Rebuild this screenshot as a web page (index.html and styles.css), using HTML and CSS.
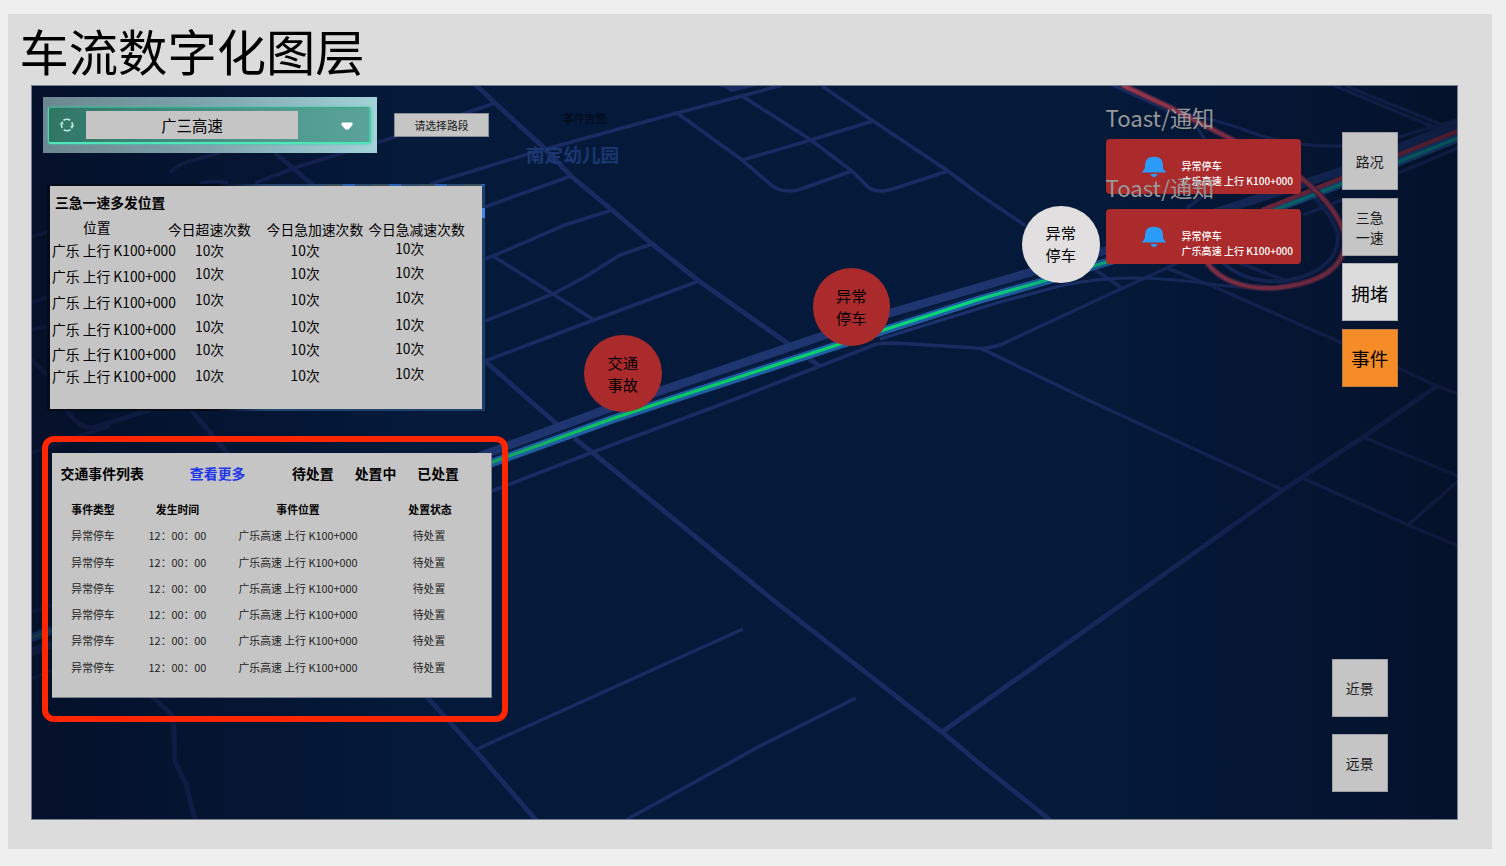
FILE: index.html
```html
<!DOCTYPE html>
<html lang="zh-CN">
<head>
<meta charset="utf-8">
<title>车流数字化图层</title>
<link rel="stylesheet" href="styles.css">
</head>
<body>
<main class="sheet">
  <h1 class="title">车流数字化图层</h1>
  <div class="map">
    <svg class="map-art" viewBox="32 86 1425 733" width="1425" height="733">
      <defs>
        <linearGradient id="shade" x1="0" x2="1" y1="0" y2="0">
          <stop offset="0" stop-color="#050c20" stop-opacity=".66"/>
          <stop offset=".17" stop-color="#040f2a" stop-opacity=".42"/>
          <stop offset=".36" stop-color="#051a3b" stop-opacity="0"/>
          <stop offset=".66" stop-color="#051a3b" stop-opacity="0"/>
          <stop offset=".85" stop-color="#040f2a" stop-opacity=".4"/>
          <stop offset="1" stop-color="#050c20" stop-opacity=".6"/>
        </linearGradient>
        <linearGradient id="green" gradientUnits="userSpaceOnUse" x1="480" x2="1458" y1="0" y2="0">
          <stop offset="0" stop-color="#19a860"/>
          <stop offset=".15" stop-color="#0ac85c"/>
          <stop offset=".5" stop-color="#08d878"/>
          <stop offset=".8" stop-color="#0aa090"/>
          <stop offset="1" stop-color="#06b8a8"/>
        </linearGradient>
      </defs>
      <g class="street">
        <path d="M476 85L495 103 543 147 571 176 612 210 652 244 699 281 790 345"/>
        <path d="M806 356L819 366"/>
        <path d="M485 361L528 399 558 425M574 438L593 453 773 600 942 732 980 764 1050 820"/>
        <path d="M427 697L475 750 536 820"/>
        <path d="M942 732L1283 490 1363 437 1417 400 1437 386"/>
        <path d="M275 153L313 185M152 697L170 713Q174 718 174 730L175 762 186 784 195 820"/>
        <path d="M31 360L48 375M67 411Q82 431 95 427L150 410M191 410L228 454"/>
      </g>
      <g class="street minor">
        <path d="M495 103L395 137 300 166 255 183M170 173Q178 163 195 160L222 152M200 184Q210 179 228 183"/>
        <path d="M430 184L535 152 677 113 742 96 782 85"/>
        <path d="M677 113L742 160 770 184Q777 191 790 191 797 191 804 188L852 171M742 160L811 140 873 121"/>
        <path d="M742 96L811 140 852 171 868 187Q872 191 884 191 890 190 896 188L948 171"/>
        <path d="M822 86L873 121 948 171 980 195 1026 226M1094 269L1122 288"/>
        <path d="M571 176L485 207M612 210L565 225 493 256 485 259M652 244L620 255 585 277 553 294 485 321"/>
        <path d="M493 256L553 294 594 320M699 281L594 320 485 361"/>
        <path d="M492 491L593 452 733 400 820 366 874 345Q880 343 895 343L976 348Q987 349 1000 345L1123 288 1167 268 1187 258"/>
        <path d="M980 348L1088 400 1283 490M1167 268L1210 285 1342 343 1398 368 1437 386 1458 394"/>
        <path d="M1363 437L1458 476M1300 477L1408 525 1458 546M1408 525L1458 481"/>
        <path d="M475 750L743 629M626 820L760 746 856 698"/>
        <path d="M31 237L48 232M31 303L48 297M31 330L48 326M31 453L80 436 110 426M31 612L52 605M31 679L52 670"/>
        <path d="M1240 263L1286 281M1187 208L1203 196"/>
      </g>
      <g class="ramp">
        <path d="M1112 85L1167 110Q1220 120 1250 132 1290 147 1343 146 1375 144 1398 137L1458 120"/>
        <path d="M1188 113L1205 140M1333 85L1436 128M1346 86L1450 128M1398 173L1458 148"/>
        <path d="M1315 198Q1337 222 1338 237 1337 270 1290 280 1250 286 1223 263" stroke-width="4"/>
        <path d="M880 339L1000 302 1060 286Q1095 278 1133 278 1170 278 1210 284 1260 291 1300 284"/>
        <path d="M1303 215L1342 200"/>
      </g>
      <path class="band" d="M31 652L52 644M478 457L607 409 660 391 793 346 890 313 980 287 1107 250 1223 210 1342 171 1398 148 1458 124"/>
      <path class="glow" d="M31 638L52 630M480 467L613 419 670 400 837 345.500 980 299.500 1047 280.500 1107 262 1277 208 1398 162 1458 138"/>
      <path class="gap" d="M480 461L613 413.500 837 339.500 980 293.500 1107 256.500"/>
      <path class="flow faint" d="M31 638L52 630"/>
      <path class="flow" d="M480 466.500L613 418.500 670 399.500 837 345 980 299 1047 280 1107 262 1277 209 1398 162 1458 138"/>
      <path class="slow" d="M1262 210L1342 178 1398 155 1458 131"/>
      <path class="jam-halo" d="M1122 85L1167 106 1237 142 1300 177Q1342 211 1345 240 1345 281 1276 288 1228 290 1207 263"/>
      <path class="jam" d="M1122 85L1167 106 1237 142 1300 177Q1342 211 1345 240 1345 281 1276 288 1228 290 1207 263"/>
      <path class="poi-mark" d="M718 86h40l-14 3-13 3-5-4z"/>
      <rect x="32" y="86" width="1425" height="733" fill="url(#shade)"/>
    </svg>

    <div class="road-select">
      <div class="road-select-inner">
        <svg class="refresh" viewBox="0 0 16 14" width="16" height="14"><path d="M4.500 2.200Q8 .2 11.200 2.200M12.800 4Q14.300 7 12.500 10.300M11.500 11.800Q8 13.800 4.800 11.800M3.200 10Q1.700 7 3.500 3.700"/><path class="tip" d="M.8 6.800L3 4.500l1.800 1.800M15.200 7.200L13 9.500l-1.800-1.800"/></svg>
        <span class="road-name">广三高速</span>
        <svg class="caret" viewBox="0 0 12 8" width="12" height="8"><path d="M1.500.5h9q1 0 1 1V3L7.500 7.500h-3L.5 3V1.500q0-1 1-1z"/></svg>
      </div>
    </div>
    <button class="section-btn">请选择路段</button>
    <span class="alarm-label">事件告警</span>
    <span class="poi">南定幼儿园</span>

    <section class="hot">
      <div class="hot-body">
        <h2>三急一速多发位置</h2>
        <div class="hot-cols">
          <div class="col c1"><b>位置</b><span>广乐 上行 K100+000</span><span>广乐 上行 K100+000</span><span>广乐 上行 K100+000</span><span>广乐 上行 K100+000</span><span>广乐 上行 K100+000</span><span>广乐 上行 K100+000</span></div>
          <div class="col c2"><b>今日超速次数</b><span>10次</span><span>10次</span><span>10次</span><span>10次</span><span>10次</span><span>10次</span></div>
          <div class="col c3"><b>今日急加速次数</b><span>10次</span><span>10次</span><span>10次</span><span>10次</span><span>10次</span><span>10次</span></div>
          <div class="col c4"><b>今日急减速次数</b><span>10次</span><span>10次</span><span>10次</span><span>10次</span><span>10次</span><span>10次</span></div>
        </div>
      </div>
    </section>

    <section class="events">
      <div class="events-body">
        <header class="events-head">
          <strong>交通事件列表</strong><a class="more">查看更多</a>
          <nav class="tabs"><strong>待处置</strong><strong>处置中</strong><strong>已处置</strong></nav>
        </header>
        <div class="row head"><span>事件类型</span><span>发生时间</span><span>事件位置</span><span>处置状态</span></div>
        <div class="row"><span>异常停车</span><span>12：00：00</span><span>广乐高速 上行 K100+000</span><span>待处置</span></div>
        <div class="row"><span>异常停车</span><span>12：00：00</span><span>广乐高速 上行 K100+000</span><span>待处置</span></div>
        <div class="row"><span>异常停车</span><span>12：00：00</span><span>广乐高速 上行 K100+000</span><span>待处置</span></div>
        <div class="row"><span>异常停车</span><span>12：00：00</span><span>广乐高速 上行 K100+000</span><span>待处置</span></div>
        <div class="row"><span>异常停车</span><span>12：00：00</span><span>广乐高速 上行 K100+000</span><span>待处置</span></div>
        <div class="row"><span>异常停车</span><span>12：00：00</span><span>广乐高速 上行 K100+000</span><span>待处置</span></div>
      </div>
    </section>

    <div class="pin pin-accident">交通<br>事故</div>
    <div class="pin pin-stopped">异常<br>停车</div>
    <div class="pin pin-handled">异常<br>停车</div>

    <div class="toasts">
      <div class="toast-group">
        <div class="toast-label">Toast/通知</div>
        <div class="toast">
          <svg class="bell" viewBox="0 0 26 22" width="26" height="22"><path d="M.8 16.600Q.8 15.700 2 15 4 13.800 4 10.500V9Q4 .8 13 .8T22 9v1.500q0 3.300 2 4.500 1.200.7 1.200 1.600zM9.500 18h7q-1 3-3.500 3t-3.500-3z"/></svg>
          <div>异常停车<br>广乐高速 上行 K100+000</div>
        </div>
      </div>
      <div class="toast-group">
        <div class="toast-label">Toast/通知</div>
        <div class="toast">
          <svg class="bell" viewBox="0 0 26 22" width="26" height="22"><path d="M.8 16.600Q.8 15.700 2 15 4 13.800 4 10.500V9Q4 .8 13 .8T22 9v1.500q0 3.300 2 4.500 1.200.7 1.200 1.600zM9.500 18h7q-1 3-3.500 3t-3.500-3z"/></svg>
          <div>异常停车<br>广乐高速 上行 K100+000</div>
        </div>
      </div>
    </div>

    <nav class="layers">
      <button class="tile">路况</button>
      <button class="tile">三急<br>一速</button>
      <button class="tile light">拥堵</button>
      <button class="tile active">事件</button>
    </nav>
    <nav class="views">
      <button class="tile">近景</button>
      <button class="tile">远景</button>
    </nav>
  </div>
</main>
</body>
</html>
```
FILE: styles.css
```css
* { box-sizing: border-box; }
body {
  margin: 0;
  height: 866px;
  overflow: hidden;
  padding: 14px 14px 17px 7.5px;
  background: #efefef;
  color: #000;
  font-family: "Noto Sans CJK SC", sans-serif;
}
button { margin: 0; padding: 0; font: inherit; color: inherit; border: 0; }
.sheet { height: 835px; background: #dcdcdc; padding: 0 34px 0 23.5px; }
.title {
  margin: 0 0 0 -11.5px;
  height: 71px;
  font-size: 49.300px;
  line-height: 71px;
  font-weight: 400;
}
.map {
  position: relative;
  width: 1427px;
  height: 735px;
  border: 1px solid #76808e;
  background: #051a3b;
}
.map-art { display: block; }
.map-art path { fill: none; }
.street { stroke: #1b2b62; stroke-width: 4.8; }
.minor { stroke-width: 3.5; }
.ramp { stroke: #1c316b; stroke-width: 3.2; }
.map-art .band { stroke: #1e356f; stroke-width: 8.5; }
.map-art .gap { stroke: #0a1f48; stroke-width: 1.5; }
.map-art .glow { stroke: #1f60a4; stroke-width: 8.5; }
.map-art .flow { stroke: url(#green); stroke-width: 3.2; }
.map-art .faint { stroke: #2a8a80; }
.map-art .slow { stroke: #b03444; stroke-width: 4.5; }
.map-art .jam-halo { stroke: #5a2c50; stroke-width: 6.5; }
.map-art .jam { stroke: #c43f50; stroke-width: 3.6; }
.map-art .poi-mark { fill: #1b2b62; }

.road-select {
  position: absolute;
  left: 11px;
  top: 11px;
  width: 334px;
  height: 56px;
  padding: 10px 6px 9px 5px;
  background: linear-gradient(90deg, #6c878f, #7fa5ad 50%, #a3d2d9);
}
.road-select-inner {
  display: flex;
  align-items: center;
  height: 37px;
  padding-left: 10px;
  border: 1px solid #3aa78f;
  border-bottom: 2px solid #4fe6ba;
  border-left-color: #4fd8ae;
  border-right: 2px solid #45cfa8;
  border-radius: 3px;
  background: linear-gradient(90deg, #317565, #459083 50%, #5ba39a);
  box-shadow: 0 0 3px #45c8a4;
}
.refresh { fill: none; stroke: #b9eedc; stroke-width: 1.6; }
.tip { stroke-width: 1; }
.road-name {
  width: 212px;
  height: 28px;
  margin: 0 43px 0 11px;
  background: #c5c5c5;
  font-size: 15.4px;
  line-height: 29px;
  text-align: center;
}
.map .caret path { fill: #fff; }
.caret { margin-top: 2px; }
.section-btn {
  position: absolute;
  left: 362px;
  top: 27px;
  width: 95px;
  height: 24px;
  border: 1px solid #888e98;
  background: #c5c5c5;
  font-size: 10.8px;
  line-height: 23px;
  color: #1a1a1a;
}
.alarm-label { position: absolute; left: 531px; top: 22px; font-size: 10.8px; line-height: 20px; color: #020814; }
.poi { position: absolute; left: 494px; top: 54px; font-size: 18.6px; line-height: 28px; font-weight: 700; color: #1b3770; }

.hot {
  position: absolute;
  left: 15px;
  top: 98px;
  width: 438px;
  height: 227px;
  padding: 2px 3px;
  background: linear-gradient(90deg, #060b18 0 38%, #24456e 50%, #1d4068 100%);
}
.hot::before {
  content: "";
  position: absolute;
  right: 0;
  top: 0;
  width: 176px;
  height: 2px;
  background: repeating-linear-gradient(90deg, #2a4a70 0 18px, #3a4f5c 18px 34px, #2b62b4 34px 46px);
}
.hot::after {
  content: "";
  position: absolute;
  right: 0;
  top: 24px;
  width: 3px;
  height: 10px;
  background: #3f86e8;
}
.hot-body { height: 223px; padding: 5px 0 0 2px; background: #c5c5c5; }
.hot h2 { margin: 0 0 0 3px; font-size: 13.8px; line-height: 22px; font-weight: 700; }
.hot-cols { display: flex; font-size: 13.8px; line-height: 20px; white-space: nowrap; }
.hot-cols b { font-weight: 400; }
.col { display: grid; width: 116px; padding-top: 6px; }
.c1 { padding-top: 4px; grid-template-rows: 22.500px 26.500px 26px 26.500px 25.500px 22px 20px; }
.c1 b { padding-left: 31px; }
.c2, .c3, .c4 { grid-template-rows: 20.500px 23.500px 25.500px 27px 23.500px 25.500px 20px; }
.c4 { grid-template-rows: 18.500px 24px 25.500px 27px 23.500px 25.500px 20px; }
.c2 { width: 100.500px; }
.c2 span { padding-left: 27px; }
.c3 { width: 103.500px; }
.c3 span { padding-left: 24px; }
.c4 span { padding-left: 27px; }

.events {
  position: absolute;
  left: 10px;
  top: 350px;
  width: 466px;
  height: 286px;
  padding: 11px 10px 18px 4px;
  border: 6px solid #ff2600;
  border-radius: 12px;
}
.events-body {
  width: 440px;
  height: 245px;
  padding-top: 5px;
  border: solid #7b838f;
  border-width: 0 1px 1px 0;
  background: #c5c5c5;
}
.events-head { display: flex; height: 38px; padding: 0 32px 0 8.500px; font-size: 13.9px; line-height: 30px; white-space: nowrap; }
.more { margin-left: 46px; font-weight: 700; color: #1f35e8; }
.tabs { display: flex; gap: 21px; margin-left: 46.500px; }
.row {
  display: grid;
  grid-template-columns: 82px 87px 154px 110px;
  height: 26.300px;
  font-size: 10.85px;
  line-height: 27px;
  text-align: center;
  white-space: nowrap;
  color: #222;
}
.head { font-weight: 700; color: #000; }
.row span:nth-child(4) { padding-right: 2px; }
.head span:nth-child(4) { padding-right: 0; }

.pin {
  position: absolute;
  width: 77.500px;
  height: 77.500px;
  padding-top: 16px;
  border-radius: 50%;
  background: #ab2a2b;
  font-size: 15.300px;
  line-height: 22.300px;
  text-align: center;
}
.pin-accident { left: 552px; top: 248.500px; }
.pin-stopped { left: 780.500px; top: 182px; }
.pin-handled { left: 990px; top: 119.500px; padding-top: 15px; background: #e1dfe0; }

.toasts { position: absolute; left: 1073.500px; top: 17px; width: 195px; }
.toast-group + .toast-group { margin-top: -20.500px; }
.toast-label { height: 36px; font-size: 22.200px; line-height: 29px; color: #989898; }
.toast {
  display: flex;
  height: 54.500px;
  padding: 19px 0 0 35px;
  gap: 15px;
  border-radius: 4px;
  background: #ab2a2b;
  color: #fff;
  font-size: 10.050px;
  font-weight: 500;
  line-height: 15px;
  white-space: nowrap;
}
.bell { flex: none; margin-top: -2px; }
.map .bell path { fill: #2a9bf8; }

.layers { position: absolute; left: 1310px; top: 46px; display: flex; flex-direction: column; gap: 7.700px; }
.views { position: absolute; left: 1300px; top: 572.500px; display: flex; flex-direction: column; gap: 17px; }
.tile {
  width: 55.500px;
  height: 58px;
  padding-top: 1px;
  background: #c5c5c5;
  box-shadow: inset 0 0 0 1px rgba(90, 95, 110, .35);
  font-size: 13.900px;
  line-height: 20.500px;
  color: #1a1a1a;
}
.views .tile { padding-top: 2px; }
.light { background: #dcdcdc; font-size: 18.500px; color: #000; }
.active { background: #f58c28; font-size: 18.500px; color: #000; }
```
